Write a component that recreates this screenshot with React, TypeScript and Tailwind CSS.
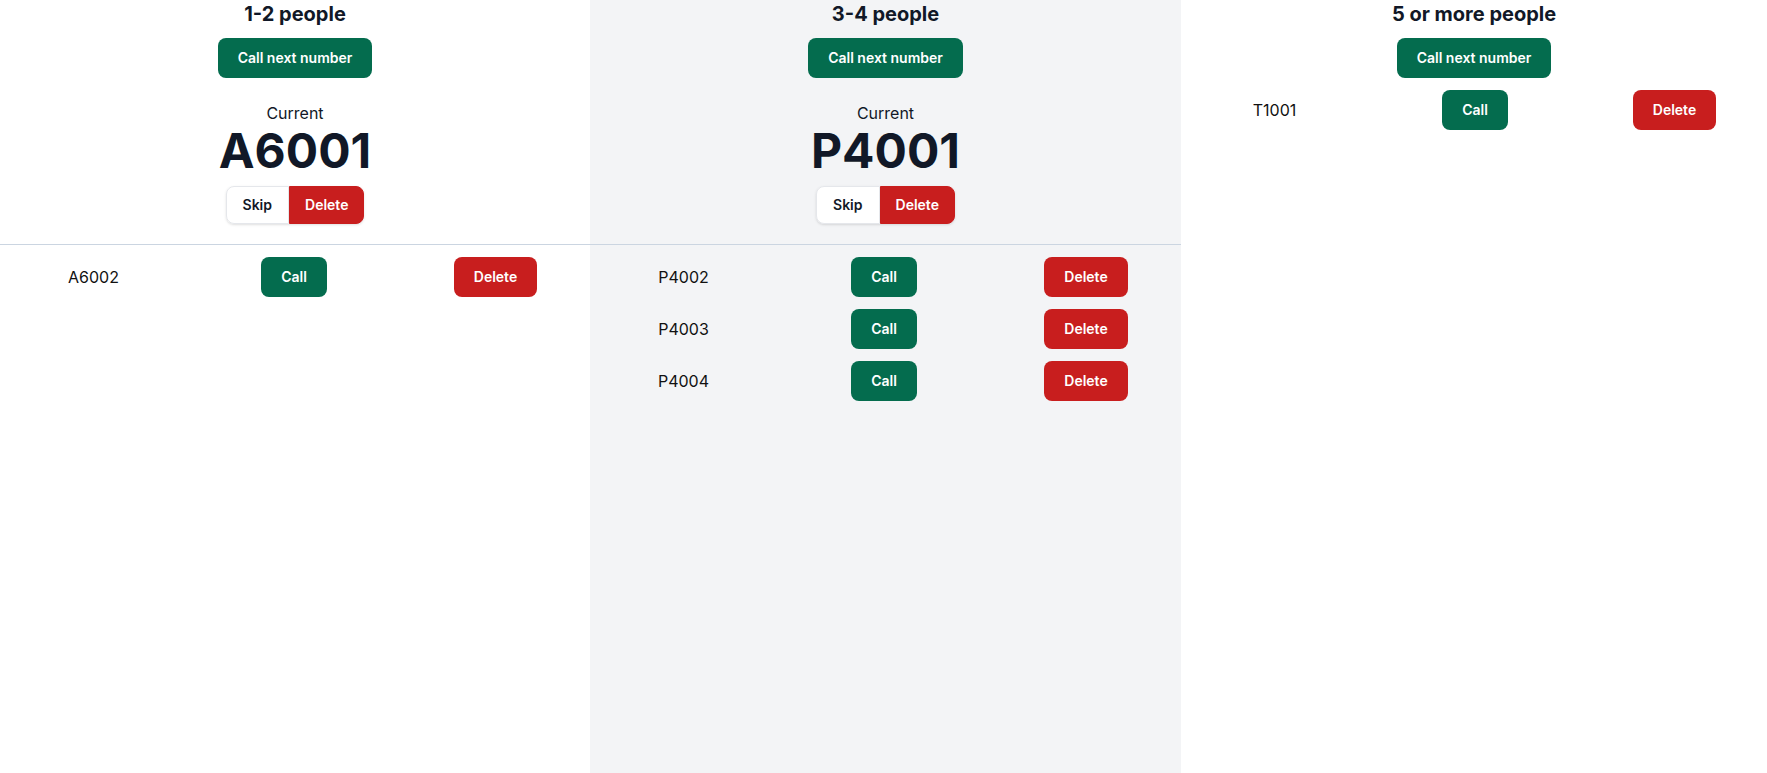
import React from "react";

type Col = {
  title: string;
  current?: string;
  queue: string[];
  bg: string;
};

const cols: Col[] = [
  { title: "1-2 people", current: "A6001", queue: ["A6002"], bg: "bg-white" },
  { title: "3-4 people", current: "P4001", queue: ["P4002", "P4003", "P4004"], bg: "bg-[#f3f4f6]" },
  { title: "5 or more people", queue: ["T1001"], bg: "bg-white" },
];

function Column({ col }: { col: Col }) {
  return (
    <div className={`${col.bg} min-h-screen flex flex-col`}>
      <div
        className={`flex flex-col items-center ${col.current ? "border-b border-[#cbd5e1] pb-5" : ""}`}
      >
        <h2 className="text-xl leading-7 font-bold text-[#111827]">{col.title}</h2>
        <button className="mt-2.5 h-10 rounded-lg bg-[#046c4e] px-5 text-sm font-semibold text-white">
          Call next number
        </button>
        {col.current && (
          <>
            <div className="mt-[23px] text-base leading-6 text-[#111827]">Current</div>
            <div className="mt-0.5 text-5xl leading-none font-bold text-[#111827]">{col.current}</div>
            <div className="mt-[11px] flex shadow-sm rounded-lg">
              <button className="h-[38px] rounded-l-lg border border-[#e5e7eb] bg-white px-4 text-sm font-semibold text-[#111827]">
                Skip
              </button>
              <button className="h-[38px] rounded-r-lg border border-[#c81e1e] bg-[#c81e1e] px-[15px] text-sm font-semibold text-white">
                Delete
              </button>
            </div>
          </>
        )}
      </div>
      <div className="flex flex-col gap-3 pt-3">
        {col.queue.map((q) => (
          <div key={q} className="grid grid-cols-[187px_214px_1fr] items-center justify-items-center">
            <span className="text-base text-[#111]">{q}</span>
            <button className="h-10 rounded-lg bg-[#046c4e] px-5 text-sm font-semibold text-white">Call</button>
            <button className="h-10 rounded-lg bg-[#c81e1e] px-5 text-sm font-semibold text-white">Delete</button>
          </div>
        ))}
      </div>
    </div>
  );
}

export default function App() {
  return (
    <div
      className="grid grid-cols-[590px_591px_1fr] min-h-screen"
      style={{ fontFamily: "Inter, 'Noto Sans', sans-serif" }}
    >
      {cols.map((c) => (
        <Column key={c.title} col={c} />
      ))}
    </div>
  );
}
